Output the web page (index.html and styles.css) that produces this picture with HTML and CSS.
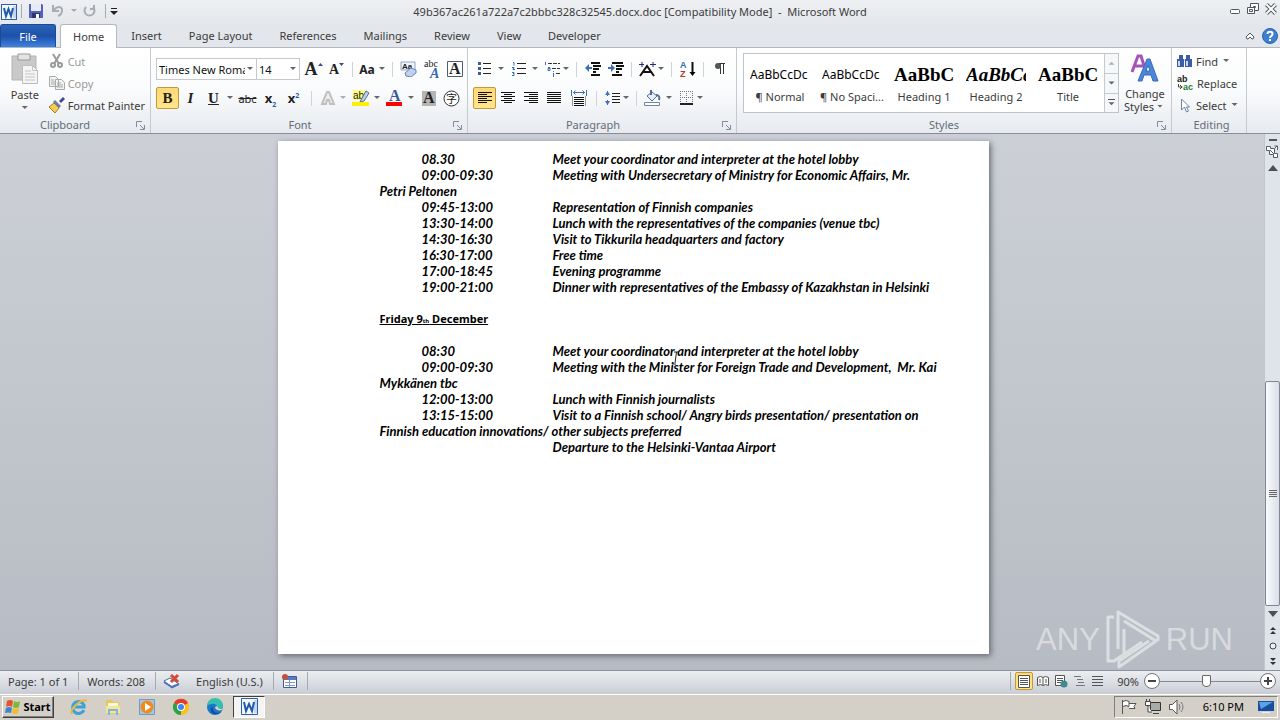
FILE: index.html
```html
<!DOCTYPE html>
<html lang="en">
<head>
<meta charset="utf-8">
<title>49b367ac261a722a7c2bbbc328c32545.docx.doc [Compatibility Mode] - Microsoft Word</title>
<link rel="stylesheet" href="styles.css">
</head>
<body>
<header class="titlebar">
  <div class="quick">
    <button class="qbtn" aria-label="Word menu"><svg width="18" height="18"><rect x="1.500" y="2.500" width="15" height="15" fill="#f4f8fd" stroke="#2b61a8"/><path d="M13 4h3v12h-3z" fill="#c4d7ef"/><path d="M4 6l2 8 2.500-7 2.500 7 2-8" fill="none" stroke="#1d5aa8" stroke-width="2"/></svg></button>
    <span class="qsep"></span>
    <button class="qbtn save" aria-label="Save"><svg width="16" height="16"><path d="M1 1h13l1 1v13H1z" fill="#5361b8"/><path d="M3 1h10v7H3z" fill="#e6ebf8"/><path d="M4 10h8v5H4z" fill="#2e356f"/><path d="M8 11h3v4H8z" fill="#fff"/></svg></button>
    <button class="qbtn" aria-label="Undo"><svg width="14" height="14"><path d="M2 1v6h6M2 7c3-5 9-5 9-1 0 3-1 5-4 6" fill="none" stroke="#a9adb3" stroke-width="2"/></svg></button>
    <i class="arr dim"></i>
    <button class="qbtn" aria-label="Redo"><svg width="14" height="14"><path d="M3 3a5 5 0 1 0 7 0M11 1v4H7" fill="none" stroke="#a9adb3" stroke-width="2"/></svg></button>
    <span class="qsep late"></span>
    <button class="qbtn tiny" aria-label="Customize toolbar"><svg width="8" height="8"><path d="M1 1.500h6" stroke="#222"/><path d="M0 4h8L4 8z" fill="#222"/></svg></button>
  </div>
  <h1>49b367ac261a722a7c2bbbc328c32545.docx.doc [Compatibility Mode] &nbsp;-&nbsp; Microsoft Word</h1>
  <div class="winbtns">
    <button aria-label="Minimize"><svg width="12" height="12"><rect x="1.500" y="6.500" width="9" height="4" rx="1" fill="#fff" stroke="#50565e"/></svg></button>
    <button aria-label="Restore"><svg width="12" height="12" fill="#fff" stroke="#50565e"><path d="M3.500.5h8v7h-8z"/><path d="M6.500 3.500h2v1h-2z"/><path d="M.5 4.500h7v6h-7z"/><path d="M2.500 6.500h3v2h-3z"/></svg></button>
    <button aria-label="Close"><svg width="12" height="12" fill="none"><path d="M1.500 1.500l9 9M10.500 1.500l-9 9" stroke="#50565e" stroke-width="4"/><path d="M1.500 1.500l9 9M10.500 1.500l-9 9" stroke="#fff" stroke-width="2"/></svg></button>
  </div>
</header>

<nav class="tabs">
  <button class="tab file">File</button>
  <button class="tab active">Home</button>
  <button class="tab">Insert</button>
  <button class="tab">Page Layout</button>
  <button class="tab">References</button>
  <button class="tab">Mailings</button>
  <button class="tab">Review</button>
  <button class="tab">View</button>
  <button class="tab">Developer</button>
  <span class="grow"></span>
  <button class="help" aria-label="Minimize ribbon"><svg width="10" height="8"><path d="M1 5l4-4 4 4-1 2H7L5 5 3 7H2z" fill="#fff" stroke="#50565e"/></svg></button>
  <button class="help" aria-label="Help"><svg width="16" height="16"><circle cx="8" cy="8" r="7.500" fill="#3e7fd0" stroke="#2b62ad"/><path d="M5.500 6c0-3 5-3 5 0 0 2-2.500 2-2.500 4" fill="none" stroke="#fff" stroke-width="2"/><path d="M7 11h2v2H7z" fill="#fff"/></svg></button>
</nav>

<main class="ribbon">
  <section class="group clipboard">
    <div class="body">
      <button class="big paste"><svg width="28" height="31"><path d="M1 3h24v24H1z" fill="#c9c9c9" stroke="#b4b4b4"/><path d="M7 1h12v6H7z" fill="#e3e3e3" stroke="#999"/><path d="M11.500 12.500h10l5 5v13h-15z" fill="#f5f5f5" stroke="#bcbcbc"/><path d="M21.500 12.500v5h5M14 18h6M14 21h10M14 24h10M14 27h10" stroke="#c4c4c4" fill="none"/></svg><span>Paste</span><i class="arr"></i></button>
      <div class="stack">
        <button class="item off"><svg width="16" height="16" fill="none" stroke="#9b9b9b" stroke-width="2"><path d="M4 1l6 10M11 1L5 11"/><circle cx="4" cy="12" r="2"/><circle cx="11" cy="12" r="2"/></svg>Cut</button>
        <button class="item off"><svg width="16" height="16" fill="#f2f2f2" stroke="#a9a9a9"><path d="M.5 1.500h6l3 3v7h-9zM6.500 4.500h6l3 3v7h-9z"/><path d="M2 5h3M2 7h4M2 9h4M8 8h4M8 10h6M8 12h6"/></svg>Copy</button>
        <button class="item"><svg width="16" height="16"><path d="M10 4l4-4 2 2-4 4z" fill="#3e4b8c"/><path d="M6 3l6 6-2 2-6-6z" fill="#6b7bb5"/><path d="M5 6l5 5-4 5-6-6z" fill="#f1cf57" stroke="#a77d22"/></svg>Format Painter</button>
      </div>
    </div>
    <h2>Clipboard</h2><svg class="launch" width="9" height="9"><path d="M.5 6V.5H6M4 4l4 4M8.500 4v4.500H4" fill="none" stroke="#858c95"/></svg>
  </section>

  <section class="group font">
    <div class="rows">
      <div class="row">
        <label class="combo name"><input value="Times New Roman" aria-label="Font name"><i class="arr"></i></label>
        <label class="combo size"><input value="14" aria-label="Font size"><i class="arr"></i></label>
        <button class="cell" aria-label="Grow font"><b class="serif grow-a">A</b><svg width="5" height="15"><path d="M0 4h5L2.500 1z" fill="#3a4d86"/></svg></button>
        <button class="cell" aria-label="Shrink font"><b class="serif small-a">A</b><svg width="5" height="15"><path d="M0 1h5L2.500 4z" fill="#3a4d86"/></svg></button>
        <span class="sep"></span>
        <button class="cell narrow" aria-label="Change case"><b class="case">Aa</b></button><i class="arr"></i>
        <span class="sep"></span>
        <button class="cell" aria-label="Clear formatting"><svg width="18" height="16"><path d="M1 1h14v8H1z" fill="#eef4fb" stroke="#8fa5c4"/><text x="2" y="8" class="t7">Aa</text><path d="M5 12l6-5 5 2v3l-5 4-5-1z" fill="#c1d2ef" stroke="#6b84b8"/></svg></button>
        <button class="cell" aria-label="Text effects"><svg width="18" height="20"><text x="1" y="8" class="t9">abc</text><text x="7" y="19" class="t13">A</text></svg></button>
        <button class="cell" aria-label="Character border"><svg width="16" height="16"><path d="M.5.5h15v15H.5z" fill="#fff" stroke="#4e5d77"/><text x="2" y="13" class="t15">A</text></svg></button>
      </div>
      <div class="row">
        <button class="cell on"><b class="serif">B</b></button>
        <button class="cell"><i class="serif"><b>I</b></i></button>
        <button class="cell"><u class="serif"><b>U</b></u></button><i class="arr"></i>
        <button class="cell"><s class="strike">abc</s></button>
        <button class="cell"><b>x<sub>2</sub></b></button>
        <button class="cell"><b>x<sup>2</sup></b></button>
        <span class="sep roomy"></span>
        <button class="cell narrow" aria-label="Text effect"><svg width="16" height="16"><path d="M2 14L7 2h2l5 12h-4l-1-4H7l-1 4z" fill="#eee" stroke="#c0c0c0" stroke-width="2"/></svg></button><i class="arr dim"></i>
        <button class="cell" aria-label="Highlight"><svg width="18" height="18"><path d="M1 1h12v10H1z" fill="#ffff7a"/><text x="1" y="10" class="t10">ab</text><path d="M9 11l5-9 3 2-5 8-4 1z" fill="#bdd0e8" stroke="#536d96"/><path d="M0 13h17v4H0z" fill="#ffef00"/></svg></button><i class="arr"></i>
        <button class="cell" aria-label="Font color"><svg width="17" height="18"><text x="3" y="12" class="t15 blue">A</text><path d="M0 13h16v4H0z" fill="#f00"/></svg></button><i class="arr"></i>
        <button class="cell" aria-label="Shading"><svg width="14" height="15"><path d="M0 0h14v15H0z" fill="#b5b5b5"/><text x="1" y="12" class="t15">A</text></svg></button>
        <button class="cell" aria-label="Enclose characters"><svg width="17" height="17"><circle cx="8.500" cy="8.500" r="7.500" fill="#fff" stroke="#333"/><text x="3" y="13" class="cjk">字</text></svg></button>
      </div>
    </div>
    <h2>Font</h2><svg class="launch" width="9" height="9"><path d="M.5 6V.5H6M4 4l4 4M8.500 4v4.500H4" fill="none" stroke="#858c95"/></svg>
  </section>

  <section class="group para">
    <div class="rows">
      <div class="row">
        <button class="cell" aria-label="Bullets"><svg width="14" height="14"><path d="M0 0h3v3H0zM0 5h3v3H0zM0 10h3v3H0z" fill="#3f5d9e"/><path d="M5 1.500h8M5 6.500h8M5 11.500h8" stroke="#222"/></svg></button><i class="arr"></i>
        <button class="cell" aria-label="Numbering"><svg width="14" height="14"><path d="M1 .5h1v3M0 5.500h2v1H1v1h2M0 10.500h2v1H1 2v2H0" fill="none" stroke="#3f6fb8"/><path d="M5 1.500h9M5 6.500h9M5 11.500h9" stroke="#222"/></svg></button><i class="arr"></i>
        <button class="cell" aria-label="Multilevel list"><svg width="17" height="15"><path d="M1.500 0v3M4 5.500h2v3H4v-2h2M9.500 9v1M9.500 11v4" fill="none" stroke="#3f6fb8"/><path d="M4 1.500h12M8 6.500h8M12 11.500h4" stroke="#333" stroke-dasharray="4 1"/></svg></button><i class="arr tight"></i>
        <span class="sep"></span>
        <button class="cell" aria-label="Decrease indent"><svg width="16" height="14"><path d="M6 1h9M8 4h8M8 7h6M8 10h3M6 13h9" stroke="#111" stroke-width="2"/><path d="M0 6l4-4v3h3v2H4v3z" fill="#3f6fb8"/></svg></button>
        <button class="cell" aria-label="Increase indent"><svg width="16" height="14"><path d="M4 1h11M8 4h8M8 7h6M8 10h3M4 13h10" stroke="#111" stroke-width="2"/><path d="M7 6L3 2v3H0v2h3v3z" fill="#3f6fb8"/></svg></button>
        <span class="sep"></span>
        <button class="cell" aria-label="Asian layout"><svg width="17" height="15"><path d="M1 14L8 4l7 10M4 10h8" fill="none" stroke="#111" stroke-width="2"/><path d="M3 0v5M0 2.500h5M14 0v5M11 2.500h6" stroke="#202c80"/></svg></button><i class="arr tight"></i>
        <span class="sep"></span>
        <button class="cell" aria-label="Sort"><svg width="16" height="18"><text x="0" y="8" class="t9s bluefill">A</text><text x="0" y="17" class="t9s red">Z</text><path d="M12.500 2v11" stroke="#111" stroke-width="2"/><path d="M9.500 12h6l-3 4z"/></svg></button>
        <span class="sep"></span>
        <button class="cell" aria-label="Show marks"><svg width="12" height="14"><path d="M5 1.500h6M6.500 1v11M9.500 1v11" stroke="#333"/><circle cx="4" cy="4" r="3" fill="#555"/></svg></button>
      </div>
      <div class="row">
        <button class="cell on" aria-label="Align left"><svg width="14" height="14"><path d="M0 1.500h14M0 3.500h9M0 5.500h14M0 7.500h9M0 9.500h14M0 11.500h9" stroke="#111"/></svg></button>
        <button class="cell" aria-label="Center"><svg width="14" height="14"><path d="M0 1.500h14M3 3.500h8M0 5.500h14M3 7.500h8M0 9.500h14M3 11.500h8" stroke="#111"/></svg></button>
        <button class="cell" aria-label="Align right"><svg width="14" height="14"><path d="M0 1.500h14M5 3.500h9M0 5.500h14M5 7.500h9M0 9.500h14M5 11.500h9" stroke="#111"/></svg></button>
        <button class="cell" aria-label="Justify"><svg width="14" height="14"><path d="M0 1.500h14M0 3.500h14M0 5.500h14M0 7.500h14M0 9.500h14M0 11.500h14" stroke="#111"/></svg></button>
        <button class="cell wide" aria-label="Distribute"><svg width="16" height="16"><path d="M.5 0v6M15.500 0v6M2 2.500h12M4.500.5l-2 2 2 2M11.500.5l2 2-2 2" fill="none" stroke="#3f6fb8"/><path d="M1.500 6v10M14.500 6v10" stroke="#999"/><path d="M3 7.500h10M3 9.500h10M3 11.500h10M3 13.500h10M3 15.500h10" stroke="#111"/></svg></button>
        <span class="sep"></span>
        <button class="cell" aria-label="Line spacing"><svg width="15" height="16"><path d="M2.500 1v5M2.500 10v5" stroke="#3f6fb8"/><path d="M0 5l2.500-4L5 5zM0 11l2.500 4L5 11z" fill="#3f6fb8"/><path d="M7 3.500h8M7 6.500h8M7 9.500h8M7 12.500h8" stroke="#222"/></svg></button><i class="arr tight"></i>
        <span class="sep"></span>
        <button class="cell" aria-label="Fill"><svg width="17" height="16"><path d="M3 6l5-4 5 4-5 5z" fill="#e6eefa" stroke="#536d96"/><path d="M7 5V0M12 5c3 0 4 2 3 5" fill="none" stroke="#536d96" stroke-width="2"/><path d="M.5 12.500h15v3H.5z" fill="#fff" stroke="#7187a8"/></svg></button><i class="arr"></i>
        <button class="cell" aria-label="Borders"><svg width="14" height="14"><path d="M.5 0v13M6.500 0v13M12.500 0v13M0 .5h13M0 6.500h13" stroke="#777" stroke-dasharray="1 1"/><path d="M0 13h13" stroke="#222" stroke-width="2"/></svg></button><i class="arr tight"></i>
      </div>
    </div>
    <h2>Paragraph</h2><svg class="launch" width="9" height="9"><path d="M.5 6V.5H6M4 4l4 4M8.500 4v4.500H4" fill="none" stroke="#858c95"/></svg>
  </section>

  <section class="group styles">
    <div class="body">
      <div class="gallery">
        <button class="style"><span class="sample">AaBbCcDc</span><span>¶ Normal</span></button>
        <button class="style"><span class="sample">AaBbCcDc</span><span>¶ No Spaci...</span></button>
        <button class="style"><span class="sample head">AaBbC</span><span>Heading 1</span></button>
        <button class="style"><span class="sample head it">AaBbCc</span><span>Heading 2</span></button>
        <button class="style"><span class="sample head">AaBbC</span><span>Title</span></button>
        <div class="scroller"><button aria-label="Previous styles"><i class="arr up dim"></i></button><button aria-label="Next styles"><i class="arr"></i></button><button aria-label="More styles"><i class="bar"></i><i class="arr"></i></button></div>
      </div>
      <button class="big change"><svg width="30" height="29"><path d="M2 18L8 2h3l5 16M4 12h10" fill="none" stroke="#a653b8" stroke-width="3"/><path d="M8 27L17 5h3l8 22h-5l-2-6h-7l-2 6zM16 17h4l-2-6z" fill="#4c86d8" stroke="#376dbb" fill-rule="evenodd"/></svg><span>Change</span><span>Styles<i class="arr"></i></span></button>
    </div>
    <h2>Styles</h2><svg class="launch" width="9" height="9"><path d="M.5 6V.5H6M4 4l4 4M8.500 4v4.500H4" fill="none" stroke="#858c95"/></svg>
  </section>

  <section class="group editing">
    <div class="stack">
      <button class="item"><svg width="16" height="14"><path d="M2 1h4v4H2zM9 1h4v4H9zM0 5h7v8H0zM8 5h7v8H8z" fill="#3c5ca4"/><path d="M2 7v5M10 7v5M7 6h1" stroke="#c9d8f4" stroke-width="2"/></svg>Find<i class="arr"></i></button>
      <button class="item"><svg width="17" height="18"><text x="0" y="8" class="t9s">ab</text><text x="6" y="16" class="t9s green">ac</text><path d="M1.500 10v3h4M3 11l2 2-2 2" fill="none" stroke="#444"/></svg>Replace</button>
      <button class="item"><svg width="16" height="15"><path d="M4.500 1v11l3-3 2 5 2-1-2-4h3z" fill="#fff" stroke="#6e82a5"/></svg>Select<i class="arr"></i></button>
    </div>
    <h2>Editing</h2>
  </section>
</main>

<div class="workspace">
  <div class="desk">
    <article class="page">
      <p><time>08.30</time>Meet your coordinator and interpreter at the hotel lobby</p>
      <p><time>09:00-09:30</time>Meeting with Undersecretary of Ministry for Economic Affairs, Mr.<br>Petri Peltonen</p>
      <p><time>09:45-13:00</time>Representation of Finnish companies</p>
      <p><time>13:30-14:00</time>Lunch with the representatives of the companies (venue tbc)</p>
      <p><time>14:30-16:30</time>Visit to Tikkurila headquarters and factory</p>
      <p><time>16:30-17:00</time>Free time</p>
      <p><time>17:00-18:45</time>Evening programme</p>
      <p><time>19:00-21:00</time>Dinner with representatives of the Embassy of Kazakhstan in Helsinki</p>
      <h3>Friday 9<small>th</small> December</h3>
      <p><time>08:30</time>Meet your coordinator and interpreter at the hotel lobby</p>
      <p><time>09:00-09:30</time>Meeting with the Minister for Foreign Trade and Development, &nbsp;Mr. Kai<br>Mykkänen tbc</p>
      <p><time>12:00-13:00</time>Lunch with Finnish journalists</p>
      <p><time>13:15-15:00</time>Visit to a Finnish school/ Angry birds presentation/ presentation on<br>Finnish education innovations/ other subjects preferred</p>
      <p><time></time>Departure to the Helsinki-Vantaa Airport</p>
    </article>
    <svg class="caret" width="8" height="16"><path d="M2 1h4M4.500 1L3 12M0 13h4" stroke="#222" fill="none"/></svg>
    <div class="mark"><span>ANY</span><svg width="54" height="62" fill="none" stroke="#e9ebed" stroke-width="3" stroke-linejoin="round"><path d="M12 40V3l40 24v5M18 12l32 20-37 26v-6l30-20"/><path d="M8 8H2v44h6l28-19M18 20v25"/></svg><span>RUN</span></div>
  </div>
  <div class="vscroll">
    <i class="split"></i>
    <button aria-label="Ruler"><svg width="13" height="13" fill="#fff" stroke="#555d68"><path d="M.5 1.500h4v2h4v5h3v4h-4v-3h-4v-4h-3z"/><path d="M4 5l4 4M9 3l2-2M11.500 5v-4h-3"/></svg></button>
    <button class="upbtn" aria-label="Scroll up"><svg width="10" height="6"><path d="M0 6h10L5 0z" fill="#4b4f56"/></svg></button>
    <div class="track"><div class="thumb"><i></i><i></i><i></i><i></i></div></div>
    <button aria-label="Scroll down"><svg width="10" height="6"><path d="M0 0h10L5 6z" fill="#4b4f56"/></svg></button>
    <button aria-label="Previous page"><svg width="8" height="8"><path d="M1 4l3-3 3 3zM1 8l3-3 3 3z" fill="#333"/></svg></button>
    <button aria-label="Browse object"><svg width="8" height="8"><circle cx="4" cy="4" r="3" fill="#eee" stroke="#444"/></svg></button>
    <button aria-label="Next page"><svg width="8" height="8"><path d="M1 0l3 3 3-3zM1 4l3 3 3-3z" fill="#333"/></svg></button>
  </div>
</div>

<footer class="status">
  <button class="st pages">Page: 1 of 1</button>
  <button class="st words">Words: 208</button>
  <button class="st proof" aria-label="Proofing errors"><svg width="18" height="16"><path d="M1 8l6-3 9 6-7 4z" fill="#fff" stroke="#4465a3"/><path d="M1 9l8 5 7-3" fill="none" stroke="#4f73b8" stroke-width="2"/><path d="M8 2l7 7M15 2L8 9" stroke="#d34a37" stroke-width="3"/></svg></button>
  <button class="st lang">English (U.S.)</button>
  <button class="st macro" aria-label="Record macro"><svg width="16" height="15"><path d="M1.500 2.500h13v11h-13z" fill="#fff" stroke="#405a98"/><path d="M2 3h12v3H2z" fill="#557bc4"/><path d="M3 8.500h10M3 11.500h10M7.500 6v7" stroke="#7e98cc"/><circle cx="3" cy="3" r="3" fill="#c0513f"/></svg></button>
  <span class="grow"></span>
  <div class="views">
    <button class="view on" aria-label="Print layout"><svg width="12" height="13"><path d="M.5.5h11v12H.5z" fill="#fff" stroke="#555"/><path d="M2 3.500h8M2 5.500h8M2 7.500h8M2 9.500h8" stroke="#555"/></svg></button>
    <button class="view" aria-label="Reading"><svg width="12" height="11" fill="#fff" stroke="#555"><path d="M.5 1.500l3-1 2.500 1 2.500-1 3 1v8l-3-1-2.500 1-2.500-1-3 1zM6 1.500v8M2 4h2M2 6h2M8 4h2M8 6h2"/></svg></button>
    <button class="view" aria-label="Web layout"><svg width="13" height="13"><path d="M.5.5h9v10h-9z" fill="#fff" stroke="#555"/><path d="M2 3.500h6M2 5.500h6M2 7.500h4" stroke="#555"/><circle cx="9" cy="9" r="3.500" fill="#3f8a8e"/></svg></button>
    <button class="view" aria-label="Outline"><svg width="11" height="10"><path d="M0 .5h7M3 3.500h6M4 6.500h6M2 9.500h9" stroke="#777"/></svg></button>
    <button class="view" aria-label="Draft"><svg width="11" height="10"><path d="M0 .5h11M0 3.500h11M0 6.500h11M0 9.500h11" stroke="#555"/></svg></button>
  </div>
  <button class="percent">90%</button>
  <button class="zoom" aria-label="Zoom out"><svg width="16" height="16"><circle cx="8" cy="8" r="7.500" fill="#fff" stroke="#6e747c"/><path d="M4 8h8" stroke="#444" stroke-width="2"/></svg></button>
  <input class="slider" type="range" min="0" max="100" value="46" aria-label="Zoom">
  <button class="zoom" aria-label="Zoom in"><svg width="16" height="16"><circle cx="8" cy="8" r="7.500" fill="#fff" stroke="#6e747c"/><path d="M4 8h8M8 4v8" stroke="#444" stroke-width="2"/></svg></button>
</footer>

<footer class="taskbar">
  <button class="start"><svg width="16" height="16"><path d="M2 2q3-2 6 0L7 8q-3-2-6 0z" fill="#e5522b"/><path d="M9 2q3 2 6 0l-1 6q-3 2-6 0z" fill="#7db83a"/><path d="M1 9q3-2 6 0l-1 5q-3-1-6 0z" fill="#3f83d1"/><path d="M8 9q3 2 6 0l-1 5q-3 2-6 0z" fill="#f2bd28"/></svg>Start</button>
  <button class="task" aria-label="Internet Explorer"><svg width="18" height="18"><path d="M14 12a6 6 0 1 1 0-5v2H5" fill="none" stroke="#3ba0dc" stroke-width="3"/><path d="M2 16C-1 11 12 0 17 3" fill="none" stroke="#e8b93c" stroke-width="2"/></svg></button>
  <button class="task" aria-label="Explorer"><svg width="18" height="18"><path d="M2 2h6l1 2h6v12H2z" fill="#e8c75a"/><path d="M4 5h10v6H4z" fill="#fdf6d6"/><path d="M2 8h14v7H2z" fill="#f5e49c"/><path d="M4 17v-6h10v6h-2v-4H6v4z" fill="#7db7e2"/></svg></button>
  <button class="task" aria-label="Media Player"><svg width="18" height="18"><path d="M1.500 1.500h15v15h-15z" fill="#9fc7e8" stroke="#6d9cc4"/><circle cx="9" cy="9" r="6.500" fill="#f08a1c"/><path d="M7 5l6 4-6 4z" fill="#fff"/></svg></button>
  <button class="task" aria-label="Chrome"><svg width="18" height="18"><circle cx="9" cy="9" r="8" fill="#fbc116"/><path d="M9 9L2 5a8 8 0 0 1 14 0z" fill="#e33b2e"/><path d="M9 9v8A8 8 0 0 1 2 5z" fill="#2ba24c"/><circle cx="9" cy="9" r="4" fill="#fff"/><circle cx="9" cy="9" r="3" fill="#4285f4"/></svg></button>
  <button class="task" aria-label="Edge"><svg width="18" height="18"><circle cx="9" cy="9" r="8" fill="#1b77c9"/><path d="M1 8a8 8 0 0 1 16 0c0 4-5 4-6 2 1-4-5-6-10-2z" fill="#35bfae"/><path d="M7 9c-1 5 4 7 8 5-4 4-12 2-10-4z" fill="#104f96"/><path d="M9 9c0 3 4 4 7 3l2-2-3 1c-3 0-3-2-4-3z" fill="#d4d0c8"/></svg></button>
  <button class="task current" aria-label="Word"><svg width="17" height="17"><path d="M.5.5h16v16H.5z" fill="#f4f8fd" stroke="#2b61a8"/><path d="M13 2h3v13h-3z" fill="#c4d7ef"/><path d="M3 4l2 9 3-7 3 7 2-9" fill="none" stroke="#1d5aa8" stroke-width="2"/></svg></button>
  <span class="grow"></span>
  <div class="tray">
    <svg width="16" height="16"><path d="M1.500 1v14M2 2.500q3-2 6 0v5q-3-2-6 0M8 4.500h7l-2 3 1 2H8" fill="#fff" stroke="#555"/></svg>
    <svg width="16" height="16"><path d="M5.500 3.500h10v8h-10z" fill="#aaa" stroke="#333"/><path d="M8 14.500h6M.5 2.500h5v4h-5zM1.500 0v2M4.500 0v2M3 7v6h4" fill="#fff" stroke="#444"/></svg>
    <svg width="16" height="16"><path d="M.5 5.500h3L8 1v14l-4.500-4.500h-3z" fill="#fff" stroke="#555"/><path d="M10 5q2 3 0 6M12 3q4 5 0 10" fill="none" stroke="#777"/></svg>
    <span class="clock">6:10 PM</span>
    <svg width="16" height="14"><path d="M0 1h16v10H0z" fill="#174f9e"/><path d="M1 2h14L3 9z" fill="#5da2e8"/><path d="M4 12.500h8" stroke="#eee"/></svg>
  </div>
</footer>
</body>
</html>
```

FILE: styles.css
```css
* { box-sizing: border-box; }
body { margin: 0; height: 100vh; display: flex; flex-direction: column; overflow: hidden; font-family: "Noto Sans", "Open Sans", sans-serif; font-size: 11px; line-height: 15px; color: #3b3b3b; background: #e3e6ea; }
button { border: 0; padding: 0; margin: 0; background: none; font: inherit; color: inherit; display: flex; align-items: center; justify-content: center; white-space: nowrap; }
svg { display: block; flex: none; }
h1, h2, h3, p { margin: 0; font: inherit; }
.grow { flex: 1; }

/* small drop-down triangle */
.arr { flex: none; width: 12px; height: 4px; display: block; background: linear-gradient(#666, #666); clip-path: polygon(3px 0, 9px 0, 6px 3px); }
.arr.dim { opacity: .5; }
.arr.up { clip-path: polygon(3px 3px, 9px 3px, 6px 0); }

.titlebar { flex: none; height: 24px; display: grid; grid-template-columns: 1fr auto 1fr; align-items: center; padding-bottom: 2px; background: linear-gradient(#eef0f3, #e4e7eb); }
.titlebar h1 { white-space: nowrap; }
.quick { display: flex; align-items: center; gap: 2px; }
.qbtn { min-width: 16px; }
.qbtn.tiny { min-width: 8px; }
.qsep { width: 1px; height: 14px; margin: 0 4px 0 1px; background: #a5abb3; }
.qsep.late { margin: 0 2px 0 5px; }
.save { margin-right: 4px; }
.winbtns { display: flex; gap: 6px; justify-content: flex-end; padding: 0 3px 4px 0; }

.tabs { flex: none; height: 24px; display: flex; gap: 1px; background: #e3e6ea; border-bottom: 1px solid #b3b8c0; }
.tab { padding: 0 13px; border-radius: 3px 3px 0 0; }
.tab.file { width: 56px; margin-right: 3px; color: #fff; background: linear-gradient(#2a63b8, #1e50a8 50%, #3f83df); border: 1px solid #1d4a97; border-bottom: 0; }
.tab.active { height: 24px; padding: 0 12px; background: #fff; border: 1px solid #b3b8c0; border-bottom: 0; }
.help { margin-right: 3px; padding: 0 3px; }
.help + .help { margin-right: 2px; padding: 0; }

.ribbon { flex: none; height: 86px; display: flex; background: linear-gradient(#fff, #fafbfc 50%, #e6eaef); border-bottom: 1px solid #888e97; }
.group { position: relative; flex: none; display: flex; flex-direction: column; border-right: 1px solid #c5cad1; padding: 2px 5px 0; }
.group h2 { margin-top: auto; text-align: center; color: #666c74; line-height: 16px; }
.launch { position: absolute; right: 5px; bottom: 3px; }
.clipboard { width: 151px; }
.clipboard h2 { padding-right: 20px; }
.font { width: 317px; }
.font h2, .para h2 { padding-right: 18px; }
.para { width: 269px; }
.styles { width: 435px; padding: 2px 0 0 6px; }
.styles h2 { padding-right: 26px; }
.editing { width: 75px; padding-right: 0; }
.body { display: flex; }
.big { flex-direction: column; justify-content: flex-start; }
.paste { width: 40px; padding-top: 3px; }
.paste span { margin: 3px 0 4px; }
.stack { display: flex; flex-direction: column; align-items: flex-start; }
.clipboard .stack { margin-left: 4px; }
.item { height: 22px; gap: 3px; }
.item .arr { margin-left: -1px; }
.off { color: #9a9a9a; }

.rows { display: flex; flex-direction: column; gap: 5px; padding-top: 7px; }
.row { display: flex; align-items: center; height: 24px; }
.row .arr { margin-left: -1px; }
.row .arr.tight { margin-left: -4px; }
.cell { width: 23px; height: 22px; flex: none; font-size: 13px; color: #222; }
.cell.narrow { width: 20px; }
.cell.wide { width: 27px; }
.cell.on, .view.on { background: linear-gradient(#fdd977, #ffe58a); border: 1px solid #c2983f; border-radius: 2px; }
.sep { width: 1px; height: 15px; background: #d0d4d9; margin: 0 4px; flex: none; }
.sep.roomy { margin: 0 6px; }
.combo { display: flex; align-items: center; height: 22px; border: 1px solid #c5cad1; background: #fff; }
.combo + .combo { border-left: 0; margin-right: 2px; }
.combo input { flex: 1; min-width: 0; border: 0; padding: 0 0 0 2px; font: inherit; color: #111; background: none; }
.name { width: 101px; }
.size { width: 43px; }
.serif { font-family: "Liberation Serif", serif; font-size: 15px; }
.grow-a { font-size: 18px; }
.small-a { font-size: 14px; }
.case { font-size: 12px; }
.strike { font-size: 11px; }
.cell sub, .cell sup { font-size: 7px; line-height: 0; color: #2a5ca8; }

text { font-family: "Liberation Serif", serif; fill: #222; }
.t7 { font: bold 8px "Liberation Sans", sans-serif; }
.t9 { font-size: 10px; }
.t9s { font: bold 9px "Liberation Sans", sans-serif; }
.t10 { font: 10px "Liberation Sans", sans-serif; }
.t13 { font-size: 14px; font-weight: bold; font-style: italic; fill: #3a68b4; }
.t15 { font-size: 16px; font-weight: bold; }
.blue { fill: #3b5998; }
.bluefill { fill: #3a68b4; }
.red { fill: #b1382d; }
.green { fill: #2b7a35; }
.cjk { font: 11px "Noto Sans CJK SC", sans-serif; }

.gallery { flex: none; display: flex; height: 60px; margin-top: 3px; border: 1px solid #bfc4cb; background: #fff; }
.style { width: 72px; flex-direction: column; justify-content: flex-start; padding-top: 9px; }
.sample { width: 60px; height: 26px; line-height: 24px; overflow: hidden; text-align: left; color: #000; font-size: 12px; }
.head { font-family: "Liberation Serif", serif; font-weight: bold; font-size: 19px; }
.it { font-style: italic; }
.scroller { width: 14px; display: grid; grid-template-rows: 1fr 1fr 1fr; border-left: 1px solid #c5cad1; background: #f6f7f9; }
.scroller button { flex-direction: column; gap: 2px; }
.scroller button + button { border-top: 1px solid #c5cad1; }
.bar { width: 7px; height: 1px; background: #555; }
.change { flex: 1; padding-top: 4px; line-height: 13px; }
.change svg { margin-bottom: 4px; }
.change span { display: flex; align-items: center; }

.workspace { flex: 1; min-height: 0; display: flex; background: linear-gradient(#ccd0d6, #b7bbc3); }
.desk { position: relative; flex: 1; display: flex; justify-content: center; align-items: flex-start; padding: 7px 0 0 2px; }
.page { width: 711px; height: 513px; padding: 10px 40px 0 102px; background: #fff; box-shadow: 2px 2px 6px #666b73; color: #000; font-family: Lato, "Noto Sans", sans-serif; font-size: 13px; font-weight: bold; line-height: 16px; white-space: nowrap; }
.page p { font-style: italic; text-indent: 42px; }
.page time { display: inline-block; width: 131px; text-indent: 0; }
.page h3 { margin: 16px 0; font-family: "Noto Sans", sans-serif; font-size: 11px; text-decoration: underline; }
.page small { font-size: 6px; line-height: 0; }
.caret { position: absolute; left: 672px; top: 217px; }
.mark { position: absolute; right: 31px; bottom: -1px; display: flex; align-items: center; gap: 6px; color: #e3e5e8; opacity: .75; font-family: "Liberation Sans Narrow", "Liberation Sans", sans-serif; font-size: 31px; line-height: 62px; }
.vscroll { width: 16px; display: flex; flex-direction: column; align-items: center; background: #dfe3ea; border-left: 1px solid #c0c5ce; }
.vscroll button { height: 16px; flex: none; }
.vscroll .upbtn { height: 18px; }
.split { width: 8px; height: 2px; margin: 5px 0 2px; background: #555; flex: none; }
.track { flex: 1; width: 15px; display: flex; flex-direction: column; justify-content: flex-end; }
.thumb { height: 225px; border: 1px solid #808791; border-radius: 2px; background: linear-gradient(90deg, #fafbfd, #d9dee8); display: flex; flex-direction: column; align-items: center; justify-content: center; gap: 1px; }
.thumb i { width: 8px; height: 1px; background: #666; }

.status { flex: none; height: 24px; display: flex; align-items: center; padding-bottom: 3px; border-top: 1px solid #8d939d; background: linear-gradient(#eceef1, #c9cdd4); }
.st { height: 18px; padding: 0 10px 0 8px; border-right: 1px solid #a5abb4; }
.proof { border: 0; padding: 0 10px 0 7px; }
.lang { padding-left: 5px; }
.macro { padding: 0 9px 0 8px; }
.views { display: flex; border-left: 1px solid #a5abb4; padding-left: 4px; }
.view { width: 18px; height: 18px; }
.view.on { margin-right: 1px; }
.percent { margin: 0 5px 0 11px; }
.zoom { flex: none; }
.slider { appearance: none; width: 100px; height: 16px; margin: 0; background: linear-gradient(#858b94, #858b94) center / 100% 1px no-repeat; }
.slider::-webkit-slider-thumb { appearance: none; width: 9px; height: 12px; background: #fff; border: 1px solid #666; border-radius: 1px 1px 4px 4px; }
.status > :last-child { margin-right: 4px; }

.taskbar { flex: none; height: 26px; display: flex; align-items: center; padding: 1px 2px 3px; background: #d4d0c8; border-top: 1px solid #fff; }
.start { width: 52px; height: 22px; gap: 2px; margin-right: 9px; color: #000; font-weight: bold; border: 1px solid; border-color: #fff #404040 #404040 #fff; box-shadow: inset -1px -1px #808080; }
.task { width: 32px; height: 22px; margin-right: 2px; }
.task.current { background: #f5f4f2; border: 1px solid; border-color: #404040 #fff #fff #404040; }
.tray { height: 22px; display: flex; align-items: center; gap: 8px; padding: 0 3px 0 6px; border: 1px solid; border-color: #808080 #fff #fff #808080; color: #000; }
.clock { margin: 0 6px 0 10px; }
```
